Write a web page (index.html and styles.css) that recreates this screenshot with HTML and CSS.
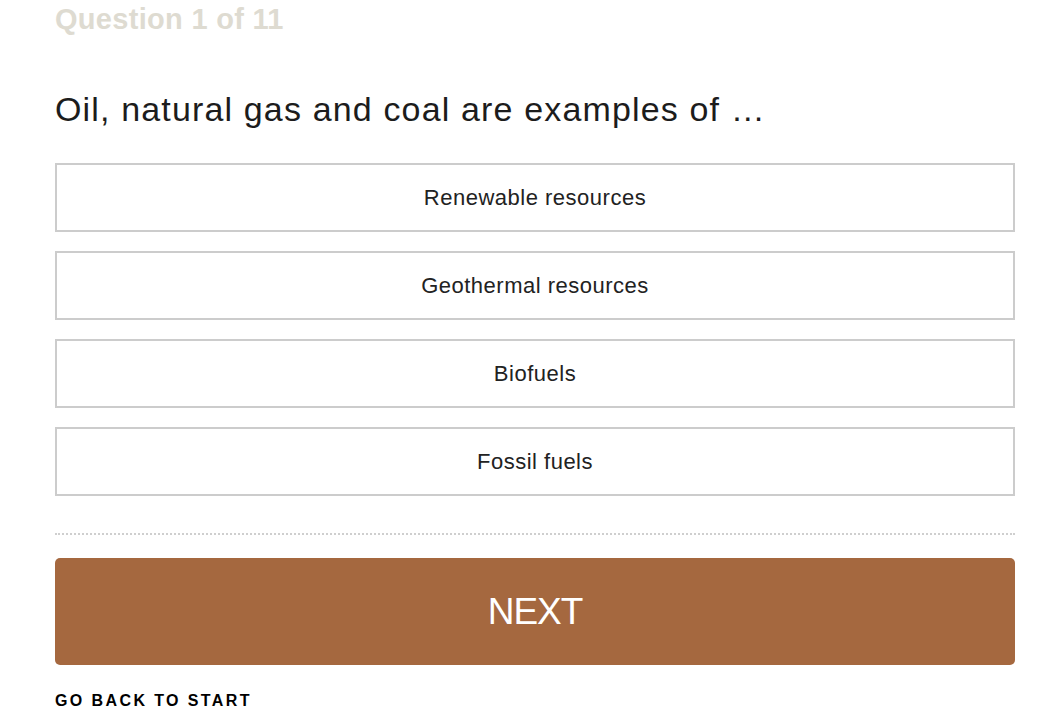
FILE: index.html
```html
<!DOCTYPE html>
<html>
<head>
<meta charset="utf-8">
<link rel="stylesheet" href="styles.css">
</head>
<body>
<div class="quiz">
  <div class="counter">Question 1 of 11</div>
  <h1 class="question">Oil, natural gas and coal are examples of …</h1>
  <div class="options">
    <button class="option">Renewable resources</button>
    <button class="option">Geothermal resources</button>
    <button class="option">Biofuels</button>
    <button class="option">Fossil fuels</button>
  </div>
  <hr class="divider">
  <button class="next">NEXT</button>
  <a class="back">GO BACK TO START</a>
</div>
</body>
</html>
```
FILE: styles.css
```css
html, body {
  margin: 0;
  padding: 0;
  background: #fff;
}
body {
  font-family: "Liberation Sans", Arial, sans-serif;
  color: #222;
}
.quiz {
  width: 960px;
  margin: 0 0 0 55px;
  display: flex;
  flex-direction: column;
}
.counter {
  font-size: 29px;
  font-weight: bold;
  color: #dedbd1;
  line-height: 32px;
  margin-top: 3px;
  letter-spacing: 0.3px;
}
.question {
  font-weight: normal;
  font-size: 34px;
  line-height: 40px;
  margin: 54px 0 0 0;
  color: #1c1c1c;
  letter-spacing: 1.15px;
}
.options {
  margin-top: 34px;
  display: flex;
  flex-direction: column;
  gap: 19px;
}
.option {
  height: 69px;
  border: 2px solid #cccccc;
  background: #fff;
  font-family: "Liberation Sans", Arial, sans-serif;
  font-size: 22px;
  color: #222;
  text-align: center;
  padding: 0;
  letter-spacing: 0.5px;
}
.divider {
  border: none;
  border-top: 2px dotted #cfcfcf;
  margin: 37px 0 0 0;
  height: 0;
}
.next {
  margin-top: 23px;
  height: 107px;
  border: none;
  border-radius: 5px;
  background: #a5683f;
  color: #fff;
  font-family: "Liberation Sans", Arial, sans-serif;
  font-size: 37px;
  letter-spacing: -1px;
  padding: 0;
}
.back {
  margin-top: 26px;
  font-size: 16px;
  font-weight: bold;
  letter-spacing: 2.4px;
  color: #000;
  line-height: 20px;
}
```
